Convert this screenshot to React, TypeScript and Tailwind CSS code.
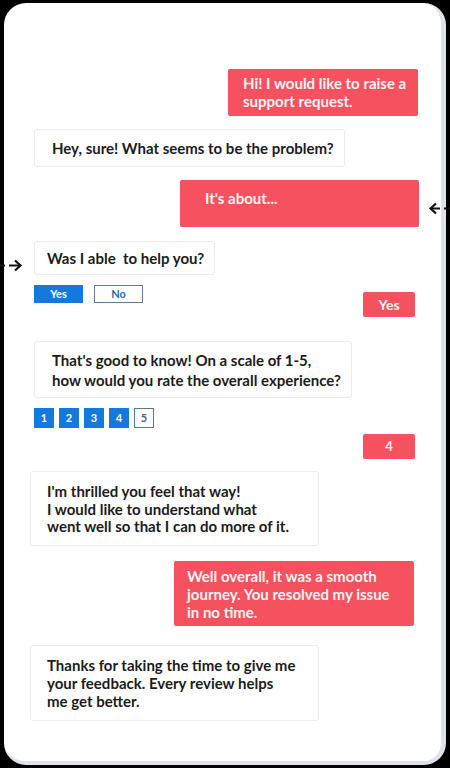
import { FC, ReactNode } from "react";

const font = { fontFamily: 'Lato, "Open Sans", "Liberation Sans", sans-serif' };

const Bot: FC<{ className: string; children: ReactNode }> = ({ className, children }) => (
  <div
    className={
      "bg-white border border-[#ececec] rounded-[3px] text-[#1c1c1c] font-bold whitespace-nowrap " +
      className
    }
  >
    {children}
  </div>
);

const User: FC<{ className: string; children: ReactNode }> = ({ className, children }) => (
  <div
    className={
      "self-end bg-[#f5515f] rounded-[2px] text-[#fff4f4] font-bold text-[15px] whitespace-nowrap " + className
    }
  >
    {children}
  </div>
);

const App: FC = () => {
  return (
    <div className="w-[450px] h-[768px] bg-black pt-[3px] px-[4px] relative overflow-hidden" style={font}>
      <div className="h-[762px] rounded-[22px] bg-white border-r-[5px] border-b-[4px] border-[#dfe2ea] flex flex-col">
        <User className="mt-[66px] mr-[23px] w-[190px] h-[47px] pl-[15px] pt-[5px] leading-[18px]">
          Hi! I would like to raise a<br />
          support request.
        </User>

        <Bot className="mt-[13px] ml-[30px] w-[311px] h-[38px] pl-[17px] flex items-center text-[15px]">
          Hey, sure! What seems to be the problem?
        </Bot>

        <User className="mt-[13px] mr-[22px] w-[239px] h-[47px] pl-[25px] pt-[9px] leading-[18px]">
          It's about...
        </User>

        <Bot className="mt-[14px] ml-[30px] w-[181px] h-[34px] pl-[12px] flex items-center text-[15px]">
          Was I able&nbsp; to help you?
        </Bot>

        <div className="mt-[10px] ml-[30px] mr-[26px] flex justify-between items-start">
          <div className="flex gap-[11px]">
            <div className="w-[49px] h-[18px] bg-[#1479dc] text-white text-[11px] font-bold flex items-center justify-center">
              Yes
            </div>
            <div className="w-[49px] h-[18px] bg-white border-[1.5px] border-[#5d7d9c] text-[#2a6cae] text-[11px] font-bold flex items-center justify-center">
              No
            </div>
          </div>
          <div className="mt-[7px] w-[52px] h-[25px] bg-[#f5515f] rounded-[2px] text-[#fff4f4] font-bold text-[14px] flex items-center justify-center">
            Yes
          </div>
        </div>

        <Bot className="mt-[24px] ml-[30px] w-[318px] h-[57px] pl-[17px] pt-[8px] leading-[20px] text-[15px]">
          That's good to know! On a scale of 1-5,
          <br />
          how would you rate the overall experience?
        </Bot>

        <div className="mt-[10px] ml-[30px] flex gap-[5px]">
          {[1, 2, 3, 4].map((n) => (
            <div
              key={n}
              className="w-[20px] h-[20px] bg-[#1479dc] text-white text-[11px] font-bold flex items-center justify-center"
            >
              {n}
            </div>
          ))}
          <div className="w-[20px] h-[20px] bg-white border-[1.5px] border-[#5a7890] text-[#4a6a86] text-[11px] font-bold flex items-center justify-center">
            5
          </div>
        </div>

        <div className="self-end mt-[6px] mr-[26px] w-[52px] h-[25px] bg-[#f5515f] rounded-[2px] text-[#fff4f4] font-bold text-[13px] flex items-center justify-center">
          4
        </div>

        <Bot className="mt-[12px] ml-[26px] w-[289px] h-[75px] pl-[16px] pt-[11px] leading-[17.5px] text-[15px]">
          I'm thrilled you feel that way!
          <br />
          I would like to understand what
          <br />
          went well so that I can do more of it.
        </Bot>

        <User className="mt-[15px] mr-[27px] w-[240px] h-[65px] pl-[13px] pt-[6px] leading-[18px]">
          Well overall, it was a smooth
          <br />
          journey. You resolved my issue
          <br />
          in no time.
        </User>

        <Bot className="mt-[19px] ml-[26px] w-[289px] h-[76px] pl-[16px] pt-[10px] leading-[18px] text-[15px]">
          Thanks for taking the time to give me
          <br />
          your feedback. Every review helps
          <br />
          me get better.
        </Bot>
      </div>

      <svg className="absolute left-[428px] top-[202px]" width="22" height="13" viewBox="0 0 22 13">
        <path d="M8 1.5 L2.5 6.5 L8 11.5" fill="none" stroke="#111" strokeWidth="2.2" />
        <path d="M3 6.5 H12 M16 6.5 H22" stroke="#111" strokeWidth="1.8" />
      </svg>
      <svg className="absolute left-0 top-[259px]" width="23" height="13" viewBox="0 0 23 13">
        <path d="M15 1.5 L20.5 6.5 L15 11.5" fill="none" stroke="#111" strokeWidth="2.2" />
        <path d="M0 6.5 H5 M9 6.5 H20" stroke="#111" strokeWidth="1.8" />
      </svg>
    </div>
  );
};

export default App;
